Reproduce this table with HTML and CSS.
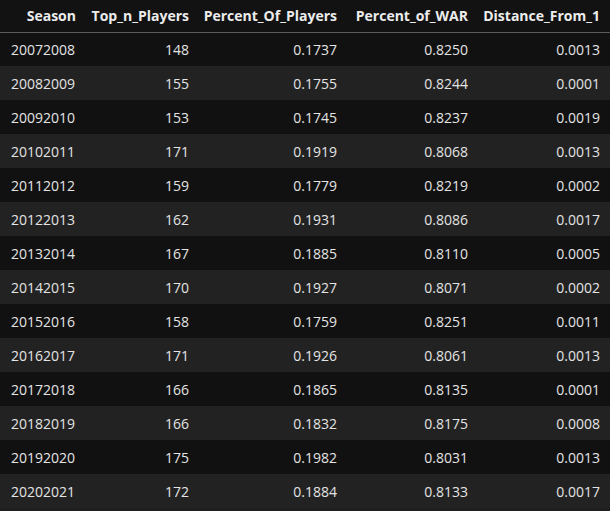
FILE: index.html
```html
<!DOCTYPE html>
<html>
<head>
<meta charset="utf-8">
<link rel="stylesheet" href="styles.css">
</head>
<body>
<table class="df">
  <colgroup>
    <col class="c1"><col class="c2"><col class="c3"><col class="c4"><col class="c5">
  </colgroup>
  <thead>
    <tr><th>Season</th><th>Top_n_Players</th><th>Percent_Of_Players</th><th>Percent_of_WAR</th><th>Distance_From_1</th></tr>
  </thead>
  <tbody>
    <tr><td class="left">20072008</td><td>148</td><td>0.1737</td><td>0.8250</td><td>0.0013</td></tr>
    <tr><td class="left">20082009</td><td>155</td><td>0.1755</td><td>0.8244</td><td>0.0001</td></tr>
    <tr><td class="left">20092010</td><td>153</td><td>0.1745</td><td>0.8237</td><td>0.0019</td></tr>
    <tr><td class="left">20102011</td><td>171</td><td>0.1919</td><td>0.8068</td><td>0.0013</td></tr>
    <tr><td class="left">20112012</td><td>159</td><td>0.1779</td><td>0.8219</td><td>0.0002</td></tr>
    <tr><td class="left">20122013</td><td>162</td><td>0.1931</td><td>0.8086</td><td>0.0017</td></tr>
    <tr><td class="left">20132014</td><td>167</td><td>0.1885</td><td>0.8110</td><td>0.0005</td></tr>
    <tr><td class="left">20142015</td><td>170</td><td>0.1927</td><td>0.8071</td><td>0.0002</td></tr>
    <tr><td class="left">20152016</td><td>158</td><td>0.1759</td><td>0.8251</td><td>0.0011</td></tr>
    <tr><td class="left">20162017</td><td>171</td><td>0.1926</td><td>0.8061</td><td>0.0013</td></tr>
    <tr><td class="left">20172018</td><td>166</td><td>0.1865</td><td>0.8135</td><td>0.0001</td></tr>
    <tr><td class="left">20182019</td><td>166</td><td>0.1832</td><td>0.8175</td><td>0.0008</td></tr>
    <tr><td class="left">20192020</td><td>175</td><td>0.1982</td><td>0.8031</td><td>0.0013</td></tr>
    <tr><td class="left">20202021</td><td>172</td><td>0.1884</td><td>0.8133</td><td>0.0017</td></tr>
  </tbody>
</table>
</body>
</html>
```
FILE: styles.css
```css
html, body {
  margin: 0;
  padding: 0;
  background: #1f1f1f;
}
.df {
  width: 610px;
  border-collapse: collapse;
  table-layout: fixed;
  font-family: "Open Sans", "Noto Sans", sans-serif;
  font-size: 14px;
  color: #e4e4e4;
}
.c1 { width: 86px; }
.c2 { width: 113px; }
.c3 { width: 148px; }
.c4 { width: 131px; }
.c5 { width: 132px; }
.df th {
  height: 31px;
  padding: 0 10px 0 0;
  text-align: right;
  font-weight: 700;
  color: #ececec;
  background: #121212;
  border-bottom: 1px solid #5c5c5c;
  white-space: nowrap;
  box-sizing: border-box;
  height: 32px;
}
.df td {
  height: 34px;
  padding: 0 10px 0 0;
  text-align: right;
  box-sizing: border-box;
  white-space: nowrap;
}
.df td.left {
  text-align: left;
  padding-left: 11px;
}
.df tbody tr:nth-child(odd) { background: #111111; }
.df tbody tr:nth-child(even) { background: #222222; }
```
